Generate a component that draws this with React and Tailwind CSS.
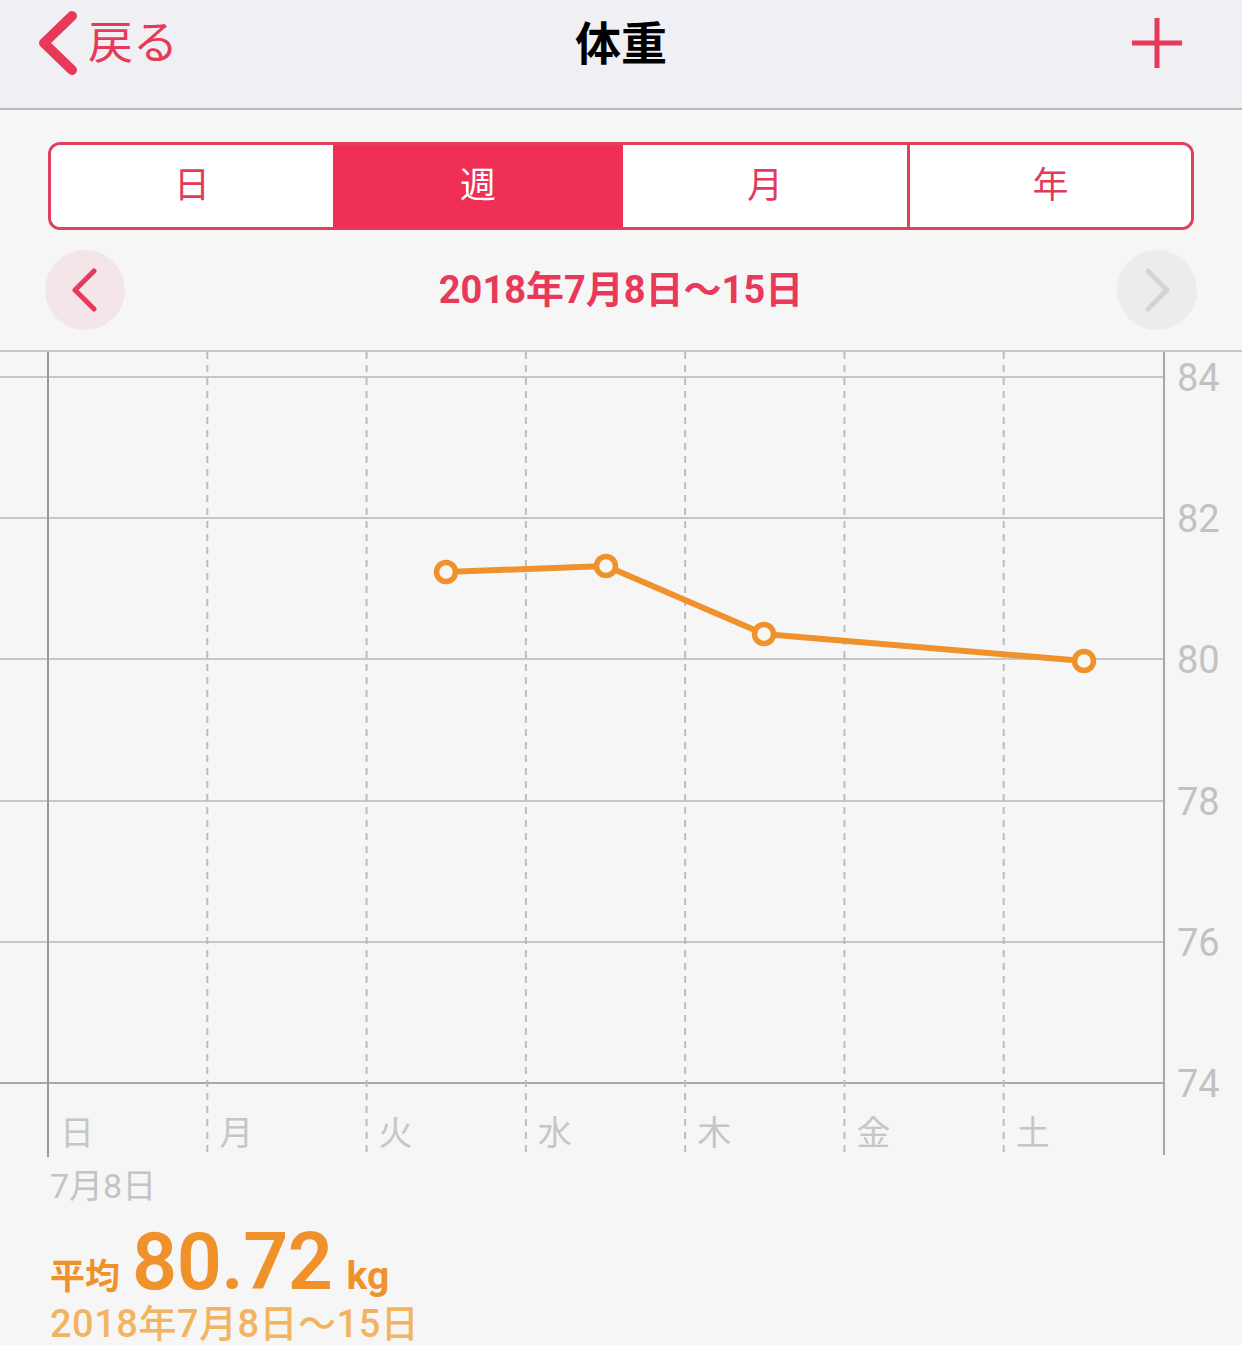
const RED = '#e8395a';
const ORANGE = '#f0922b';

const tabs = ['日', '週', '月', '年'];
const days = ['日', '月', '火', '水', '木', '金', '土'];
const yLabels = ['84', '82', '80', '78', '76', '74'];
const gridY = [25, 166, 307, 449, 590, 731];
const points = [
  [446, 220],
  [606, 214],
  [764, 282],
  [1084, 309],
];

function Plot() {
  const cols = [];
  for (let i = 1; i < 7; i++) cols.push(48 + (1115 / 7) * i);
  return (
    <svg className="absolute inset-0" width="1163" height="805" viewBox="0 0 1163 805">
      {gridY.map((y, i) => (
        <line key={y} x1="0" x2="1163" y1={y} y2={y} stroke={i === 5 ? '#a8a8a8' : '#c6c6c6'} strokeWidth="2" />
      ))}
      {cols.map((x) => (
        <line key={x} x1={x} x2={x} y1="0" y2="805" stroke="#bdbdbd" strokeWidth="2" strokeDasharray="7 6" />
      ))}
      <line x1="48" x2="48" y1="0" y2="805" stroke="#9a9a9a" strokeWidth="2" />
      <polyline
        points={points.map((p) => p.join(',')).join(' ')}
        fill="none"
        stroke={ORANGE}
        strokeWidth="6"
        strokeLinejoin="round"
      />
      {points.map(([x, y]) => (
        <circle key={x} cx={x} cy={y} r="9.5" fill="#f6f6f6" stroke={ORANGE} strokeWidth="5.5" />
      ))}
    </svg>
  );
}

export default function App() {
  return (
    <div className="w-[1242px] h-[1345px] overflow-hidden bg-[#f6f6f6] font-['Roboto','Noto_Sans_CJK_JP',sans-serif]">
      {/* nav bar */}
      <header className="h-[110px] bg-[#f0eff3] border-b-2 border-[#b8b8b8] grid grid-cols-[1fr_auto_1fr] items-center">
        <div className="flex items-center pl-[36px] -mt-[22px]">
          <svg width="44" height="66" viewBox="0 0 44 66">
            <polyline points="36,6 8,33 36,60" fill="none" stroke={RED} strokeWidth="10" strokeLinecap="round" strokeLinejoin="round" />
          </svg>
          <span className="ml-[8px] text-[45px] leading-none text-[#e8395a]">戻る</span>
        </div>
        <h1 className="text-[46px] font-bold text-black leading-none -mt-[20px]">体重</h1>
        <div className="flex justify-end pr-[59px] -mt-[22px]">
          <svg width="52" height="52" viewBox="0 0 52 52">
            <path d="M26 1v50M1 26h50" stroke={RED} strokeWidth="5" />
          </svg>
        </div>
      </header>

      {/* segmented control */}
      <div className="mt-[32px] mx-[48px] h-[88px] border-[3px] border-[#e0405f] rounded-[12px] overflow-hidden grid grid-cols-[282px_290px_284px_1fr]">
        {tabs.map((t, i) => (
          <div
            key={t}
            className={
              i === 1
                ? 'bg-[#ef2f55] text-white flex items-center justify-center text-[36px]'
                : `bg-white text-[#e23b5a] flex items-center justify-center text-[36px] ${i === 3 ? 'border-l-[3px] border-[#e0405f]' : ''}`
            }
          >
            {t}
          </div>
        ))}
      </div>

      {/* period nav */}
      <div className="mt-[20px] h-[80px] px-[45px] flex items-center justify-between">
        <div className="w-[80px] h-[80px] rounded-full bg-[#f4e5e8] flex items-center justify-center">
          <svg width="30" height="44" viewBox="0 0 30 44">
            <polyline points="24,3 5,22 24,41" fill="none" stroke={RED} strokeWidth="5" strokeLinecap="round" strokeLinejoin="round" />
          </svg>
        </div>
        <div className="text-[38px] font-bold text-[#e8395a] leading-none">2018年7月8日〜15日</div>
        <div className="w-[80px] h-[80px] rounded-full bg-[#ececec] flex items-center justify-center">
          <svg width="30" height="44" viewBox="0 0 30 44">
            <polyline points="6,3 25,22 6,41" fill="none" stroke="#d4d4d4" strokeWidth="5" strokeLinecap="round" strokeLinejoin="round" />
          </svg>
        </div>
      </div>

      {/* chart */}
      <div className="mt-[20px] h-[805px] border-t-2 border-[#c6c6c6] flex">
        <div className="relative w-[1163px] h-full flex flex-col justify-end">
          <Plot />
          <div className="relative ml-[48px] h-[74px] grid grid-cols-7">
            {days.map((d) => (
              <div key={d} className="pl-[12px] pt-[35px] text-[34px] leading-none text-[#c6c6c6]">
                {d}
              </div>
            ))}
          </div>
        </div>
        <div className="flex-1 border-l-2 border-[#a8a8a8] pt-[7px] pl-[12px]">
          {yLabels.map((l) => (
            <div key={l} className="h-[141.2px] text-[38px] leading-[38px] text-[#c2c2c2]">
              {l}
            </div>
          ))}
        </div>
      </div>

      {/* summary */}
      <div className="pl-[50px]">
        <div className="mt-[14px] text-[34px] leading-none text-[#c4c4c4]">7月8日</div>
        <div className="mt-[20px] flex items-baseline text-[#f0922b]">
          <span className="text-[35px] font-bold leading-none">平均</span>
          <span className="ml-[12px] text-[79px] font-semibold leading-none tracking-[-0.5px]">80.72</span>
          <span className="ml-[14px] text-[39px] font-bold leading-none">kg</span>
        </div>
        <div className="mt-[2px] text-[38px] font-medium leading-[40px] tracking-[0.5px] text-[#f3b462]">2018年7月8日〜15日</div>
      </div>
    </div>
  );
}
